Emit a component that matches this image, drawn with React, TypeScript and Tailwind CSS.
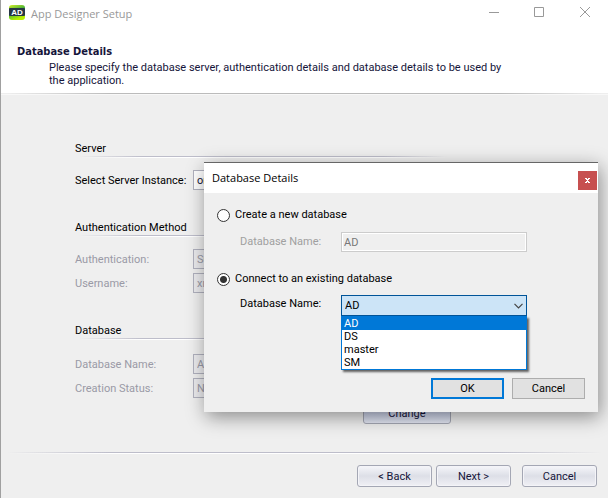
import type { ReactNode } from "react";

function Rule() {
  return (
    <div aria-hidden="true">
      <div className="h-px bg-[linear-gradient(to_right,transparent_1%,#bdbdca_18%,#bdbdca_82%,transparent_99%)]" />
      <div className="h-px bg-[linear-gradient(to_right,transparent_1%,white_18%,white_82%,transparent_99%)]" />
    </div>
  );
}

function Section({ title, children }: { title: string; children: ReactNode }) {
  return (
    <section>
      <h2 className="h-4 leading-[18px]">{title}</h2>
      <Rule />
      <div className="flex flex-col gap-1 pt-3">{children}</div>
    </section>
  );
}

function Field({ id, label, value, disabled = false }: { id: string; label: string; value: string; disabled?: boolean }) {
  return (
    <div className="flex h-5 items-center">
      <label htmlFor={id} className={`w-[118px] shrink-0 whitespace-nowrap ${disabled ? "text-[#9a9aa6]" : ""}`}>
        {label}
      </label>
      <input
        id={id}
        defaultValue={value}
        disabled={disabled}
        className={`h-5 min-w-0 flex-1 border border-[#b0b1be] px-[3px] ${
          disabled ? "bg-[#ebebee] text-[#9a9aa6]" : "bg-white text-[#15153a]"
        }`}
      />
    </div>
  );
}

function WizardButton({ children }: { children: ReactNode }) {
  return (
    <button
      type="button"
      className="h-[22px] w-[75px] rounded-[3px] border border-[#a4a7b4] bg-linear-to-b from-[#f6f6fa] via-[#dddfe7] to-[#f0f0f5] text-[#15153a] shadow-[inset_0_0_0_1px_#f4f4f8]"
    >
      {children}
    </button>
  );
}

function DatabaseDialog() {
  return (
    <div
      role="dialog"
      aria-labelledby="dialog-title"
      className="absolute top-[162px] left-[203px] w-[394px] border-t border-[#666] bg-[#efefef] leading-4 text-black shadow-[2px_5px_18px_rgba(0,0,0,0.42)]"
    >
      <div className="flex h-[30px] items-center justify-between bg-white pr-px pl-2">
        <h2 id="dialog-title" className="font-['Open_Sans','Noto_Sans',sans-serif]">
          Database Details
        </h2>
        <button
          type="button"
          aria-label="Close"
          className="mt-1 flex size-[19px] items-center justify-center bg-[#c75050] text-white"
        >
          <svg viewBox="0 0 5 5" className="h-[5px] w-[5px]" shapeRendering="crispEdges" fill="currentColor">
            <path d="M0 0h2v1H0zM3 0h2v1H3zM1 1h3v1H1zM2 2h1v1H2zM1 3h3v1H1zM0 4h2v1H0zM3 4h2v1H3z" />
          </svg>
        </button>
      </div>
      <form className="px-[13px] pt-[14px] pb-[13px]">
        <div className="flex h-4 items-center gap-[5px]">
          <input id="create" type="radio" name="mode" className="size-[13px] appearance-none rounded-full border border-[#333] bg-white" />
          <label htmlFor="create">Create a new database</label>
        </div>
        <div className="mt-[9px] flex items-center pl-[23px]">
          <label htmlFor="new-name" className="w-[101px] text-[#a0a0a0]">
            Database Name:
          </label>
          <input
            id="new-name"
            defaultValue="AD"
            disabled
            className="h-5 w-[186px] border border-[#ccc] bg-[#efefef] px-[2px] text-[#777] shadow-[inset_0_0_0_1px_white]"
          />
        </div>
        <div className="mt-[19px] flex h-4 items-center gap-[5px]">
          <input
            id="connect"
            type="radio"
            name="mode"
            defaultChecked
            className="size-[13px] appearance-none rounded-full border border-[#333] bg-white bg-radial from-[#333] from-[3px] to-white to-[4px]"
          />
          <label htmlFor="connect">Connect to an existing database</label>
        </div>
        <div className="mt-2 flex pl-[23px]">
          <label htmlFor="existing-name" className="w-[101px] pt-px">
            Database Name:
          </label>
          <div className="relative w-[186px]">
            <select
              id="existing-name"
              className="block h-[21px] w-full appearance-none border border-[#005499] bg-[#cce4f7] px-[3px]"
            >
              <option>AD</option>
              <option>DS</option>
              <option>master</option>
              <option>SM</option>
            </select>
            <svg viewBox="0 0 9 6" className="pointer-events-none absolute top-2 right-1 h-[6px] w-[9px]" fill="none" stroke="#444" strokeWidth="1.2">
              <path d="M.5.8l4 4 4-4" />
            </svg>
            <ul
              role="listbox"
              aria-label="Databases"
              className="absolute top-full left-0 w-full border border-t-0 border-[#0078d7] bg-white leading-[13px] shadow-[2px_2px_2px_rgba(0,0,0,0.6)]"
            >
              <li role="option" aria-selected="true" className="bg-[#0078d7] px-[2px] pt-px text-white">AD</li>
              <li role="option" aria-selected="false" className="px-[2px]">DS</li>
              <li role="option" aria-selected="false" className="px-[2px]">master</li>
              <li role="option" aria-selected="false" className="px-[2px]">SM</li>
            </ul>
          </div>
        </div>
        <div className="mt-[62px] flex justify-end gap-2">
          <button type="button" className="h-[21px] w-[73px] border-2 border-[#0078d7] bg-[#e1e1e1] leading-4">
            OK
          </button>
          <button type="button" className="h-[21px] w-[73px] border border-[#adadad] bg-[#e1e1e1] leading-4">
            Cancel
          </button>
        </div>
      </form>
    </div>
  );
}

export default function App() {
  return (
    <div className="relative flex min-h-screen flex-col overflow-hidden border-l border-[#a0a0a0] bg-[#efefef] font-['Roboto','Noto_Sans',sans-serif] text-[11px] leading-[13px] text-[#15153a]">
      <header className="bg-white">
        <div className="flex h-[26px] items-center justify-between pr-[17px] pl-2 text-[#999]">
          <div className="flex items-center gap-[6px]">
            <svg viewBox="0 0 16 16" className="size-4" aria-hidden="true">
              <defs>
                <linearGradient id="logo" x1="0" y1="0" x2="0.4" y2="1">
                  <stop offset="0" stopColor="#d8f028" />
                  <stop offset="0.5" stopColor="#3fae38" />
                  <stop offset="1" stopColor="#b8f000" />
                </linearGradient>
              </defs>
              <rect width="16" height="15" rx="3" fill="url(#logo)" />
              <rect y="3" width="16" height="8" rx="1" fill="#263645" />
              <text x="8" y="10" textAnchor="middle" fontFamily="Liberation Sans" fontWeight="bold" fontSize="8" fill="white">
                AD
              </text>
            </svg>
            <span className="font-['Open_Sans','Noto_Sans',sans-serif]">App Designer Setup</span>
          </div>
          <div className="flex gap-[35px] self-start pt-[7px]">
            <button type="button" aria-label="Minimize">
              <svg viewBox="0 0 11 11" className="size-[11px]" stroke="currentColor"><path d="M1 5.5h10" /></svg>
            </button>
            <button type="button" aria-label="Maximize">
              <svg viewBox="0 0 11 11" className="size-[11px]" fill="none" stroke="currentColor"><path d="M.5.5h9v9h-9z" /></svg>
            </button>
            <button type="button" aria-label="Close">
              <svg viewBox="0 0 11 11" className="size-[11px]" stroke="currentColor"><path d="M0 0l10 10M10 0L0 10" /></svg>
            </button>
          </div>
        </div>
        <div className="px-4 pt-[19px] pb-[6px]">
          <h1 className="h-4 font-['DejaVu_Sans_Condensed','DejaVu_Sans',sans-serif] leading-[14px] font-bold">
            Database Details
          </h1>
          <p className="max-w-[496px] pl-8">
            Please specify the database server, authentication details and database details to be used by the application.
          </p>
        </div>
      </header>
      <div aria-hidden="true">
        <div className="h-px bg-[linear-gradient(to_right,#eee_1%,#bbb_18%,#bbb_82%,#eee_99%)]" />
        <div className="h-px bg-[#f8f8f8]" />
      </div>

      <main className="flex flex-col gap-[29px] pt-[45px] pr-[157px] pl-[74px] text-black">
        <Section title="Server">
          <Field id="server" label="Select Server Instance:" value="onpremise" />
        </Section>
        <Section title="Authentication Method">
          <Field id="auth" label="Authentication:" value="SQL Server" disabled />
          <Field id="user" label="Username:" value="xm" disabled />
        </Section>
        <Section title="Database">
          <div className="flex flex-col gap-1 pt-[2px]">
            <Field id="db" label="Database Name:" value="AD" disabled />
            <Field id="status" label="Creation Status:" value="New" disabled />
          </div>
          <button
            type="button"
            className="h-[22px] w-[88px] self-end rounded-[3px] border border-[#a4a7b4] bg-linear-to-b from-[#f4f5fb] via-[#ccd3ea] to-[#e6e9f5] text-[#15153a]"
          >
            Change
          </button>
        </Section>
      </main>

      <footer className="mt-auto">
        <Rule />
        <div className="flex justify-end gap-1 pt-[11px] pr-[11px] pb-[11px]">
          <WizardButton>&lt; Back</WizardButton>
          <WizardButton>Next &gt;</WizardButton>
          <div className="pl-[7px]">
            <WizardButton>Cancel</WizardButton>
          </div>
        </div>
      </footer>

      <DatabaseDialog />
    </div>
  );
}
